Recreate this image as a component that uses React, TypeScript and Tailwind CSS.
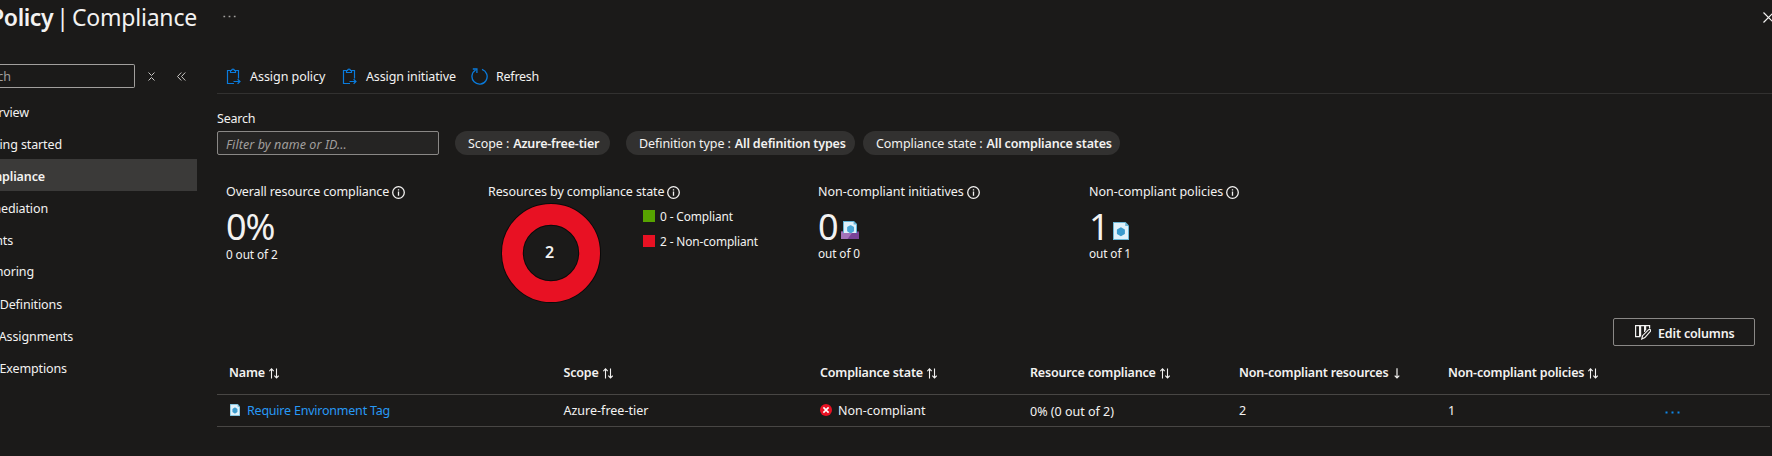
import React from "react";

function ClipboardIcon() {
  return (
    <svg className="h-[17px] w-[15px] shrink-0" viewBox="0 0 15 17" fill="none" stroke="#0a7bdc" strokeWidth="1.2">
      <path d="M4 2.5H1.500V15.500H8M10 2.500h2.500V10.500" />
      <path d="M4.500 4.500V2.500H5.600a1.400 1.400 0 0 1 2.800 0H9.500V4.500z" />
      <path d="M7.500 13.500h6M11.600 11.200l2.400 2.300-2.400 2.300" />
    </svg>
  );
}

function RefreshIcon() {
  return (
    <svg className="h-[17px] w-[17px] shrink-0" viewBox="0 0 17 17" fill="none" stroke="#0a7bdc" strokeWidth="1.3">
      <path d="M11 1.3A7.6 7.6 0 1 1 4.6 2" />
      <path d="M1.8 1h4.1v4.1" />
    </svg>
  );
}

function InfoIcon() {
  return (
    <svg className="h-[13px] w-[13px] shrink-0" viewBox="0 0 13 13" fill="none" stroke="#f3f2f1">
      <circle cx="6.5" cy="6.5" r="5.8" strokeWidth="1.3" />
      <path d="M6.5 5.5v4.200M6.5 3.200v1.400" strokeWidth="1.3" />
    </svg>
  );
}

function PolicyIcon({ className }: { className: string }) {
  return (
    <svg className={className} viewBox="0 0 16 18" preserveAspectRatio="none">
      <path d="M0 0h12.6L16 3.6V18H0z" fill="#6bb7d6" />
      <path d="M1 1h11.2v3H15v13H1z" fill="#dff1fa" />
      <path d="M7.9 6.300l3 1.700v3.500l-3 1.700-3-1.700V8z" fill="#3a9bcd" stroke="#3a9bcd" strokeWidth="2" strokeLinejoin="round" />
    </svg>
  );
}

function InitiativeIcon() {
  return (
    <svg className="h-[18px] w-[18px]" viewBox="0 0 18 18">
      <path d="M2 0h11l3 3v10H2z" fill="#63b5d8" />
      <path d="M3 1h9.600v2.600H15V13H3z" fill="#dff1fa" />
      <path d="M9.600 5l2.700 1.500v3.400l-2.700 1.600-2.700-1.600V6.500z" fill="#4aa5d4" stroke="#4aa5d4" strokeWidth="1.500" strokeLinejoin="round" />
      <path d="M0 10.500h2v1.500h14v-1.500h2V18H0z" fill="#7a4397" />
      <path d="M0 10.500h2v1.500h9L6.500 18H0z" fill="#a373b8" />
    </svg>
  );
}

function SortIcon() {
  return (
    <svg className="h-[11px] w-[10px] shrink-0" viewBox="0 0 10 11" fill="none" stroke="#f3f2f1" strokeWidth="1.1">
      <path d="M2.500 10.500V1M0.300 3.200L2.500 0.900l2.200 2.300" />
      <path d="M7.500 0.500v9.400M5.300 7.700l2.200 2.300 2.200-2.300" />
    </svg>
  );
}

function DownIcon() {
  return (
    <svg className="ml-0.5 h-[11px] w-[6px] shrink-0" viewBox="0 0 6 11" fill="none" stroke="#f3f2f1" strokeWidth="1.2">
      <path d="M3 0.200v9.700M0.700 7.700L3 10l2.300-2.300" />
    </svg>
  );
}

function EditColumnsIcon() {
  return (
    <svg className="h-[15px] w-[16px] shrink-0" viewBox="0 0 16 15" fill="none" stroke="#f3f2f1" strokeWidth="1.2">
      <path d="M0.600 0.600h4v11h-4zM5.600 11.600V0.600h4v6.500M10.600 5.500V0.600h4v3" />
      <path d="M6.800 14l0.800-3.300 6-6q1-0.700 1.700 0t0 1.700l-5.400 6.200z" fill="#1b1a19" />
    </svg>
  );
}

function ErrorIcon() {
  return (
    <svg className="mb-px h-3 w-3 shrink-0" viewBox="0 0 12 12">
      <circle cx="6" cy="6" r="6" fill="#e81123" />
      <path d="M3.400 3.400l5.200 5.200M8.600 3.400L3.400 8.600" stroke="#fff" strokeWidth="1.600" />
    </svg>
  );
}

function Dots({ className }: { className: string }) {
  return (
    <svg className={className} viewBox="0 0 15 3" fill="currentColor">
      <path d="M0.500 0.500h2v2h-2zM6.500 0.500h2v2h-2zM12.500 0.500h2v2h-2z" />
    </svg>
  );
}

function NavItem({ label, end, selected }: { label: string; end: string; selected?: boolean }) {
  return (
    <div className={selected ? "h-8 bg-[#3b3a39] pt-1 font-semibold" : "h-8 pt-1"}>
      <div className={`flex h-full items-center justify-end ${end}`}>
        <span className="tracking-[-0.12px]">{label}</span>
      </div>
    </div>
  );
}

function Sidebar() {
  return (
    <nav className="w-[197px] shrink-0 overflow-hidden">
      <div className="flex h-[39px] items-start pt-2">
        <div className="flex h-6 w-[135px] items-center rounded-r-xs border border-l-0 border-[#a19f9d] pt-0.5">
          <div className="flex w-[11px] justify-end text-[#a19f9d]">
            <span>Search</span>
          </div>
        </div>
        <svg className="mt-2 ml-[13px] h-[9px] w-[7px]" viewBox="0 0 7 9" fill="none" stroke="#c8c6c4">
          <path d="M0.500 0.500l3 3 3-3M0.500 8.500l3-3 3 3" />
        </svg>
        <svg className="mt-2 ml-[22px] h-[9px] w-[9px]" viewBox="0 0 9 9" fill="none" stroke="#c8c6c4">
          <path d="M4.300 0.500l-3.800 4 3.800 4M8.300 0.500l-3.800 4 3.800 4" />
        </svg>
      </div>
      <NavItem label="Overview" end="w-[29px]" />
      <NavItem label="Getting started" end="w-[62px]" />
      <NavItem label="Compliance" end="w-[45px]" selected />
      <NavItem label="Remediation" end="w-[48px]" />
      <NavItem label="Events" end="w-[13px]" />
      <div className="-mt-px mb-px">
        <NavItem label="Authoring" end="w-[34px]" />
      </div>
      <NavItem label="Definitions" end="w-[62px]" />
      <NavItem label="Assignments" end="w-[73px]" />
      <NavItem label="Exemptions" end="w-[67px]" />
    </nav>
  );
}

function Toolbar() {
  return (
    <div className="flex h-[34px] items-center border-b border-[#323130] pl-[9px]">
      <ClipboardIcon />
      <span className="ml-[9px] w-[92px] pt-0.5 tracking-[-0.050px]">Assign policy</span>
      <ClipboardIcon />
      <span className="ml-[9px] w-[105px] pt-0.5 tracking-[-0.120px]">Assign initiative</span>
      <RefreshIcon />
      <span className="ml-2 pt-0.5 tracking-[-0.250px]">Refresh</span>
    </div>
  );
}

function Pill({ label, value, className }: { label: string; value: string; className: string }) {
  return (
    <div className={`flex h-6 items-center gap-1 rounded-full bg-[#323130] pt-0.5 pl-[13px] ${className}`}>
      <span className="tracking-[-0.080px]">{label} :</span>
      <span className="font-semibold tracking-[-0.170px]">{value}</span>
    </div>
  );
}

function Filters() {
  return (
    <div className="mt-[14px] flex h-[47px] items-end">
      <div className="w-[222px]">
        <div className="mb-[3px] flex h-5 items-center pt-0.5 tracking-[-0.200px]">Search</div>
        <div className="flex h-6 items-center rounded-xs border border-[#8a8886] bg-[#252423] pt-1 pl-2 tracking-[0.100px] text-[#a19f9d] italic">
          Filter by name or ID...
        </div>
      </div>
      <Pill label="Scope" value="Azure-free-tier" className="ml-4 w-[155px]" />
      <Pill label="Definition type" value="All definition types" className="ml-4 w-[229px]" />
      <Pill label="Compliance state" value="All compliance states" className="ml-2 w-[257px]" />
    </div>
  );
}

function StatLabel({ children }: { children: React.ReactNode }) {
  return (
    <div className="flex h-5 items-center gap-[3px]">
      <span className="pt-px tracking-[-0.120px]">{children}</span>
      <InfoIcon />
    </div>
  );
}

function Stats() {
  return (
    <div className="mt-[27px] flex h-[136px] pl-[9px]">
      <div className="w-[262px]">
        <StatLabel>Overall resource compliance</StatLabel>
        <div className="mt-1.5 flex h-[38px] items-center text-4xl leading-9 tracking-[-1px]">0%</div>
        <div className="-mt-px flex h-5 items-center text-[11.800px] tracking-[-0.100px]">0 out of 2</div>
      </div>
      <div className="w-[330px]">
        <StatLabel>Resources by compliance state</StatLabel>
        <div className="flex pl-[12.500px]">
          <div className="mt-px grid h-[100px] w-[100px] place-items-center">
            <svg className="col-start-1 row-start-1 h-[100px] w-[100px]" viewBox="0 0 100 100">
              <circle cx="50" cy="50" r="38.600" fill="none" stroke="#0b0a0a" strokeWidth="22.800" />
              <circle cx="50" cy="50" r="38.600" fill="none" stroke="#e81123" strokeWidth="20.800" />
            </svg>
            <span className="col-start-1 row-start-1 pr-0.5 pb-0.5 text-base font-semibold">2</span>
          </div>
          <div className="mt-2 ml-[42.500px] flex flex-col gap-[13px] text-[11.900px] tracking-[-0.120px]">
            <div className="flex h-3 items-center gap-[5px]">
              <span className="h-3 w-3 bg-[#57a300]" />
              <span className="pt-0.5">0 - Compliant</span>
            </div>
            <div className="flex h-3 items-center gap-[5px]">
              <span className="h-3 w-3 bg-[#e81123]" />
              <span className="pt-0.5">2 - Non-compliant</span>
            </div>
          </div>
        </div>
      </div>
      <div className="w-[271px]">
        <StatLabel>
          <span className="tracking-[-0.040px]">Non-compliant initiatives</span>
        </StatLabel>
        <div className="mt-1.5 flex h-[38px] items-center">
          <span className="w-[23px] text-4xl leading-9 tracking-[-1px]">0</span>
          <span className="pt-1.5">
            <InitiativeIcon />
          </span>
        </div>
        <div className="-mt-0.5 flex h-5 items-center text-[11.800px] tracking-[-0.100px]">out of 0</div>
      </div>
      <div>
        <StatLabel>
          <span className="tracking-[-0.020px]">Non-compliant policies</span>
        </StatLabel>
        <div className="mt-1.5 flex h-[38px] items-center">
          <span className="w-6 text-4xl leading-9">1</span>
          <PolicyIcon className="mt-2 h-[18px] w-4" />
        </div>
        <div className="-mt-0.5 flex h-5 items-center text-[11.800px] tracking-[-0.100px]">out of 1</div>
      </div>
    </div>
  );
}

const columns = [
  "Name",
  "Scope",
  "Compliance state",
  "Resource compliance",
  "Non-compliant resources",
  "Non-compliant policies",
];

function PolicyTable() {
  return (
    <div className="mr-0.5">
      <div className="grid h-[45px] grid-cols-[334.500px_256.500px_210px_209px_209px_1fr] items-center border-b border-[#484644] pt-0.5 pl-3 font-semibold">
        {columns.map((name) => (
          <div key={name} className="flex items-center gap-1">
            <span className="tracking-[-0.170px]">{name}</span>
            {name === "Non-compliant resources" ? <DownIcon /> : <SortIcon />}
          </div>
        ))}
      </div>
      <div className="grid h-8 grid-cols-[334.500px_256.500px_210px_209px_217px_1fr] items-center border-b border-[#484644] pl-3">
        <div className="flex items-center gap-[7px] pl-px text-[#2899f5]">
          <PolicyIcon className="mb-px h-3 w-2.5" />
          <span className="pt-0.5 tracking-[-0.220px]">Require Environment Tag</span>
        </div>
        <span className="pt-0.5">Azure-free-tier</span>
        <div className="flex items-center gap-1.5">
          <ErrorIcon />
          <span className="pt-0.5">Non-compliant</span>
        </div>
        <span className="pt-[3px]">0% (0 out of 2)</span>
        <span className="pt-0.5">2</span>
        <div className="flex items-center">
          <span className="-ml-2 w-[217px] pt-0.5">1</span>
          <Dots className="mt-1 h-[3px] w-[15px] text-[#0f86e8]" />
        </div>
      </div>
    </div>
  );
}

export default function App() {
  return (
    <div className="flex h-[456px] w-full flex-col overflow-hidden bg-[#1b1a19] font-['Noto_Sans','Open_Sans',sans-serif] text-[12.500px] leading-none whitespace-nowrap text-[#f3f2f1]">
      <header className="flex h-14 shrink-0 items-start">
        <div className="flex h-[34px] w-[197px] items-center justify-end gap-[3px] text-[23px]">
          <span className="font-semibold tracking-[-0.400px]">Policy</span>
          <span>|</span>
          <span className="tracking-[-0.200px]">Compliance</span>
        </div>
        <Dots className="mt-[15px] ml-[26px] h-[3px] w-[13px] text-[#a19f9d]" />
        <svg className="mt-3 ml-auto h-[11px] w-[9px]" viewBox="0 0 9 11" fill="none" stroke="#f3f2f1" strokeWidth="1.200">
          <path d="M0.500 0.500l10 10M0.500 10.500l10-10" />
        </svg>
      </header>
      <div className="flex min-h-0 flex-1">
        <Sidebar />
        <main className="ml-5 flex min-w-0 flex-1 flex-col pt-1">
          <Toolbar />
          <Filters />
          <Stats />
          <button className="mr-[17px] flex h-7 w-[142px] shrink-0 items-center gap-[7px] self-end rounded-xs border border-[#8a8886] pl-[21px] font-semibold">
            <EditColumnsIcon />
            <span className="pt-1 tracking-[-0.150px]">Edit columns</span>
          </button>
          <div className="mt-1">
            <PolicyTable />
          </div>
        </main>
      </div>
    </div>
  );
}
